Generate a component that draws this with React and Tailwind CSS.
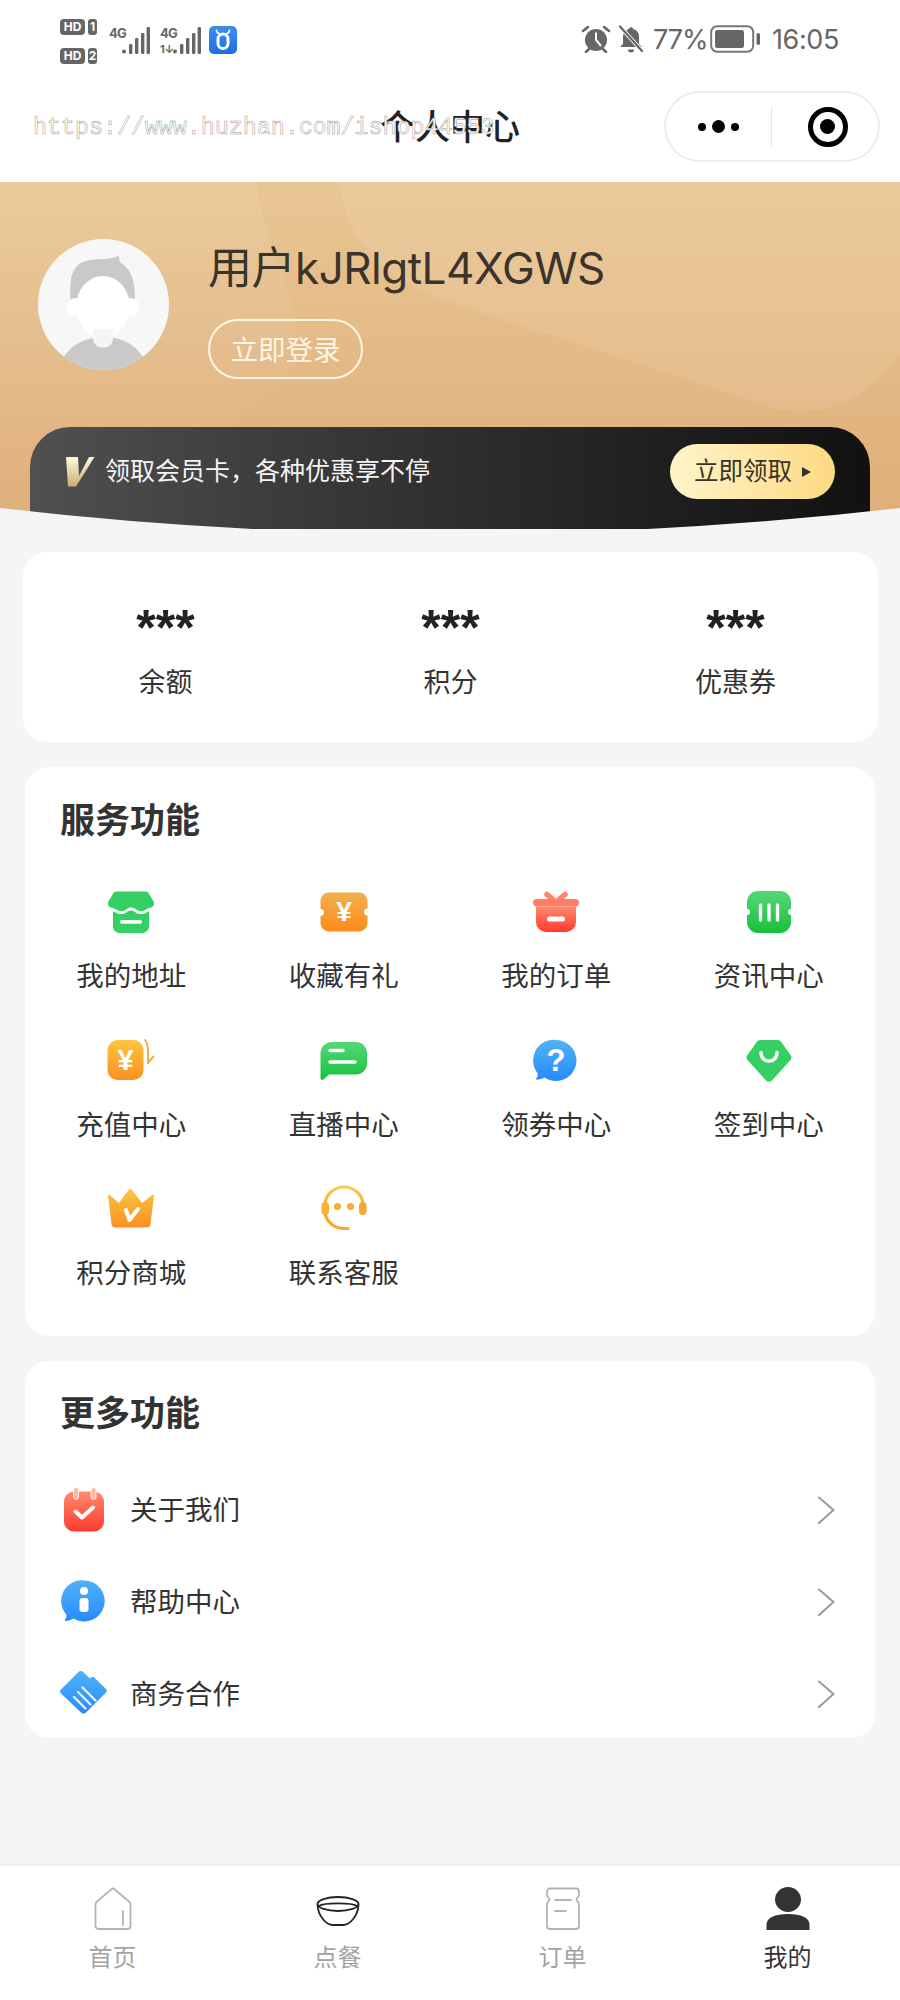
import React from "react";

const Grad = ({ id, from, to }) => (
  <linearGradient id={id} x1="0" y1="0" x2="0" y2="1">
    <stop offset="0" stopColor={from} />
    <stop offset="1" stopColor={to} />
  </linearGradient>
);

const Icon = ({ children, w = 48, h = 48 }) => (
  <svg width={w} height={h} viewBox={`0 0 ${w} ${h}`} fill="none" className="block shrink-0">
    {children}
  </svg>
);

const Yen = ({ x = 24, y = 33, size = 27 }) => (
  <text x={x} y={y} textAnchor="middle" fontSize={size} fontWeight="700" fill="#fff" fontFamily="Liberation Sans, sans-serif">¥</text>
);

const StoreIcon = () => (
  <Icon>
    <path d="M9 3.500h30a3 3 0 0 1 2.600 1.500l5 8.500c1.500 3-.5 6.500-4.600 6.500v18.500a6.500 6.500 0 0 1-6.500 6.500h-23A6.500 6.500 0 0 1 6 38V20c-4.100 0-6.100-3.500-4.600-6.500l5-8.500A3 3 0 0 1 9 3.500z" fill="#36cf63" />
    <path d="M4.500 21.500c4.500 0 4.500 3.200 10 3.200S19 21 24 21s4.500 3.700 10 3.700 4.500-3.200 9.500-3.200" stroke="#fff" strokeWidth="2.800" strokeLinecap="round" />
    <rect x="13" y="32" width="22" height="3.800" rx="1.900" fill="#fff" />
  </Icon>
);
const TicketIcon = () => (
  <Icon>
    <path d="M9 4.500h30a8.500 8.500 0 0 1 8.500 8.500v7.500a3.500 3.500 0 0 0 0 7V35a8.500 8.500 0 0 1-8.500 8.500H9A8.500 8.500 0 0 1 .5 35v-7a3.500 3.500 0 0 0 0-7v-8A8.500 8.500 0 0 1 9 4.500z" fill="url(#gOrange)" />
    <Yen y={33} size={28} />
  </Icon>
);
const GiftIcon = () => (
  <Icon>
    <path d="M15 6.500l6 5M33 6.500l-6 5" stroke="#ff8468" strokeWidth="5.500" strokeLinecap="round" />
    <rect x="1" y="11" width="46" height="7.500" rx="3.700" fill="#ff7d62" />
    <path d="M4 18.500h40V34a10 10 0 0 1-10 10H14A10 10 0 0 1 4 34z" fill="url(#gRed)" />
    <rect x="15" y="28.500" width="18" height="5" rx="2.500" fill="#fff" />
  </Icon>
);
const NewsIcon = () => (
  <Icon>
    <path d="M13 3h22a11 11 0 0 1 11 11v7a3 3 0 0 0 0 6v7a11 11 0 0 1-11 11H13A11 11 0 0 1 2 34v-7a3 3 0 0 0 0-6v-7A11 11 0 0 1 13 3z" fill="url(#gGreen)" />
    <path d="M15.500 17v15M24 17v15M32.500 17v15" stroke="#fff" strokeWidth="3.400" strokeLinecap="round" />
  </Icon>
);
const RechargeIcon = () => (
  <Icon>
    <rect x="0.500" y="3" width="36" height="40" rx="10" fill="url(#gAmber)" />
    <Yen x={18.500} y={33} size={29} />
    <path d="M38 3c3 4 3.500 9 3 23l5.500-6.500" stroke="#f3a74e" strokeWidth="2" strokeLinecap="round" strokeLinejoin="round" />
  </Icon>
);
const ChatIcon = () => (
  <Icon>
    <path d="M12 5h24a11 11 0 0 1 11 11v10.500a11 11 0 0 1-11 11H9L3.500 42.500C2 43.500.5 43 .5 41V16.500A11.500 11.500 0 0 1 12 5z" fill="url(#gGreen)" />
    <path d="M10 13.500h13M10 25h25" stroke="#fff" strokeWidth="3.400" strokeLinecap="round" />
  </Icon>
);
const QuestionIcon = () => (
  <Icon>
    <path d="M24 3a20.500 20.500 0 1 1-11.500 37.500C10 42 6 42.800 4.500 42.500c-1-.3-.5-1 0-1.500 1-1 1.500-3 1-5A20.500 20.500 0 0 1 24 3z" fill="url(#gBlue)" />
    <text x="24" y="34" textAnchor="middle" fontSize="31" fontWeight="700" fill="#fff" fontFamily="Liberation Sans, sans-serif">?</text>
  </Icon>
);
const TagIcon = () => (
  <Icon>
    <path d="M15 3h18a4 4 0 0 1 3 1.500L45.500 18a4 4 0 0 1 0 5L27 43.500a4 4 0 0 1-6 0L2.500 23a4 4 0 0 1 0-5L12 4.500A4 4 0 0 1 15 3z" fill="#36cf63" />
    <path d="M16 15.500c0 11.500 16 11.500 16 0" stroke="#fff" strokeWidth="3.400" strokeLinecap="round" />
  </Icon>
);
const CrownIcon = () => (
  <Icon>
    <path d="M1 10.500c0-1 1-1.300 1.700-.6L12 18 21.500 5c1-1.300 2.500-1.300 3.500 0L35 18l10.300-8c.8-.6 1.700-.2 1.700.7L43.500 39a4 4 0 0 1-4 3.500H8.500a4 4 0 0 1-4-3.500z" fill="url(#gAmber)" />
    <path d="M19 25l3.500 10L31 24" stroke="#fff" strokeWidth="4" strokeLinecap="round" strokeLinejoin="round" />
  </Icon>
);
const HeadsetIcon = () => (
  <Icon>
    <path d="M5 20a19 18 0 0 1 38 0" stroke="url(#gAmberV)" strokeWidth="3.200" fill="none" />
    <path d="M5 26c0 10 9 17 18 17.500h5" stroke="#f9a72b" strokeWidth="3.200" strokeLinecap="round" />
    <rect x="1.500" y="17" width="7.500" height="13" rx="3.700" fill="#f9b23a" />
    <rect x="39" y="17" width="7.500" height="13" rx="3.700" fill="#f9a72b" />
    <circle cx="17.500" cy="21.500" r="3.600" fill="#f9ad32" />
    <circle cx="30.500" cy="21.500" r="3.600" fill="#f9ad32" />
  </Icon>
);
const CalendarIcon = () => (
  <Icon>
    <rect x="4" y="5.500" width="40" height="40" rx="10" fill="url(#gRed)" />
    <rect x="13.500" y="1.500" width="5" height="12" rx="2.500" fill="#ffb9a3" stroke="#fff" strokeWidth="0.800" />
    <rect x="31" y="1.500" width="5" height="12" rx="2.500" fill="#ffb9a3" stroke="#fff" strokeWidth="0.800" />
    <path d="M15.500 25.500l6.500 6 11-10" stroke="#fff" strokeWidth="4" strokeLinecap="round" strokeLinejoin="round" />
  </Icon>
);
const InfoIcon = () => (
  <Icon>
    <path d="M24 2.500a20.500 20.500 0 1 1-10.500 38c-2.500 1.500-6 2.700-8 2.500-1-.2-.8-1-.2-1.700 1-1.300 1.400-3 .9-5A20.500 20.500 0 0 1 24 2.500z" fill="url(#gBlue)" />
    <circle cx="24" cy="13" r="4" fill="#fff" />
    <rect x="19.500" y="20" width="9" height="14" rx="3" fill="#fff" />
  </Icon>
);
const ShakeIcon = () => (
  <Icon>
    <path d="M.5 20l18-18c1.300-1.300 3-1.300 4.500 0l7 6.500c1-1 2.800-2.500 4.200-1L46 19c1 1 1 2.500 0 3.500L26 42.500c-1.500 1.500-3.500 1.500-5 0L.5 23c-1-1-1-2 0-3z" fill="url(#gBlue)" />
    <path d="M18 22l12.500 12.500M14 27l11.500 11.500M22.500 17.500l13 13" stroke="#fff" strokeWidth="2.200" strokeLinecap="round" opacity="0.9" />
  </Icon>
);

const HomeTab = () => (
  <Icon w={38} h={43}>
    <path d="M19 1.500c.7 0 1.300.4 1.700 1L35.500 15c.7.700 1 1.500 1 2.500V39a3 3 0 0 1-3 3h-29a3 3 0 0 1-3-3V17.500c0-1 .3-1.800 1-2.500L17.300 2.500c.4-.6 1-1 1.700-1z" stroke="#b4b4b4" strokeWidth="1.800" />
    <path d="M29 24v14" stroke="#b4b4b4" strokeWidth="1.800" strokeLinecap="round" />
  </Icon>
);
const BowlTab = () => (
  <Icon w={44} h={43}>
    <ellipse cx="22" cy="17" rx="20.500" ry="7" stroke="#222" strokeWidth="1.800" />
    <path d="M3 19c5-3.500 33-3.500 38 0" stroke="#222" strokeWidth="1.800" />
    <path d="M1.500 17.500C2 29 10 38 17 38h10c7 0 15-9 15.500-20.500" stroke="#222" strokeWidth="1.800" />
  </Icon>
);
const OrderTab = () => (
  <Icon w={38} h={43}>
    <path d="M6 1.500h26a3 3 0 0 1 3 3V8c0 2-2.500 3-2.500 4.500S35 15 35 17v22a3 3 0 0 1-3 3H6a3 3 0 0 1-3-3V17c0-2 2.500-3 2.500-4.500S3 10 3 8V4.500a3 3 0 0 1 3-3z" stroke="#b4b4b4" strokeWidth="1.800" />
    <path d="M11 13h16M11 24h11" stroke="#b4b4b4" strokeWidth="1.800" strokeLinecap="round" />
  </Icon>
);
const MeTab = () => (
  <Icon w={44} h={43}>
    <ellipse cx="22" cy="12.500" rx="13" ry="12.500" fill="#333" />
    <path d="M.5 43v-5.500C.5 31 9 27 22 27s21.500 4 21.500 10.500V43z" fill="#333" />
  </Icon>
);

const Chevron = () => (
  <svg width="18" height="28" viewBox="0 0 18 28" fill="none" className="block">
    <path d="M2 1.500L16.500 14 2 27" stroke="#999" strokeWidth="2" strokeLinecap="round" strokeLinejoin="round" />
  </svg>
);

const Signal = () => (
  <svg width="28" height="27" viewBox="0 0 28 27" fill="#666" className="block">
    <circle cx="2" cy="24.500" r="2" />
    <rect x="7" y="17" width="3.400" height="10" rx="1.200" />
    <rect x="13" y="11" width="3.400" height="16" rx="1.200" />
    <rect x="19" y="6" width="3.400" height="21" rx="1.200" />
    <rect x="24.600" y="0" width="3.400" height="27" rx="1.200" />
  </svg>
);

const services = [
  ["我的地址", StoreIcon],
  ["收藏有礼", TicketIcon],
  ["我的订单", GiftIcon],
  ["资讯中心", NewsIcon],
  ["充值中心", RechargeIcon],
  ["直播中心", ChatIcon],
  ["领券中心", QuestionIcon],
  ["签到中心", TagIcon],
  ["积分商城", CrownIcon],
  ["联系客服", HeadsetIcon],
];

const more = [
  ["关于我们", CalendarIcon],
  ["帮助中心", InfoIcon],
  ["商务合作", ShakeIcon],
];

const tabs = [
  ["首页", HomeTab, false],
  ["点餐", BowlTab, false],
  ["订单", OrderTab, false],
  ["我的", MeTab, true],
];

const stats = ["余额", "积分", "优惠券"];

export default function App() {
  return (
    <div className="relative flex flex-col w-[900px] h-[2000px] overflow-hidden bg-[#f5f5f5] text-[#333] font-['Inter','Noto_Sans_CJK_SC',sans-serif]">
      <svg width="0" height="0" className="absolute">
        <defs>
          <Grad id="gOrange" from="#efb14f" to="#fd8a1a" />
          <Grad id="gAmber" from="#fcc63f" to="#fb8f22" />
          <Grad id="gAmberV" from="#f8cb55" to="#f9ae35" />
          <Grad id="gRed" from="#ff8a6b" to="#ff3a30" />
          <Grad id="gGreen" from="#55d878" to="#18c03a" />
          <Grad id="gBlue" from="#50b3f4" to="#278aff" />
          <linearGradient id="gV" x1="0" y1="0" x2="0" y2="1">
            <stop offset="0" stopColor="#fff9dd" />
            <stop offset="1" stopColor="#c7ae72" />
          </linearGradient>
        </defs>
      </svg>

      <div className="bg-white h-[182px] shrink-0 flex flex-col">
        {/* status bar */}
        <div className="h-[72px] pt-[6px] pl-[60px] pr-[60px] flex items-center justify-between text-[#666]">
          <div className="flex items-center">
            <div className="flex flex-col gap-[13px] w-[37px] mt-[4px] text-white text-[12px] font-bold leading-none">
              <div className="flex gap-[3px]">
                <span className="w-[25px] h-[16px] rounded-[4px] bg-[#666] flex items-center justify-center">HD</span>
                <span className="w-[9px] h-[16px] rounded-[3px] bg-[#666] flex items-center justify-center">1</span>
              </div>
              <div className="flex gap-[3px]">
                <span className="w-[25px] h-[16px] rounded-[4px] bg-[#666] flex items-center justify-center">HD</span>
                <span className="w-[9px] h-[16px] rounded-[3px] bg-[#666] flex items-center justify-center">2</span>
              </div>
            </div>
            <div className="relative w-[42px] h-[27px] ml-[12px] mt-[2px]">
              <span className="absolute left-0 top-[-1px] text-[13px] font-bold leading-[14px] tracking-[-0.8px]">4G</span>
              <div className="absolute left-[13px] top-0"><Signal /></div>
            </div>
            <div className="relative w-[42px] h-[27px] ml-[9px] mt-[2px]">
              <span className="absolute left-0 top-[-1px] text-[13px] font-bold leading-[14px] tracking-[-0.8px]">4G</span>
              <span className="absolute left-0 top-[17px] text-[11px] font-bold leading-[10px] tracking-[-0.5px]">1↓</span>
              <div className="absolute left-[13px] top-0"><Signal /></div>
            </div>
            <div className="w-[28px] h-[28px] ml-[7px] mt-[2px] rounded-[5px] bg-linear-to-b from-[#3d8df0] to-[#1e6fe0] flex items-center justify-center">
              <svg width="20" height="22" viewBox="0 0 20 22" fill="none">
                <rect x="5" y="5" width="10" height="14.500" rx="5" stroke="#fff" strokeWidth="3" />
                <path d="M3.500 1.500c.3 2 1.500 3 3 3.500M16.500 1.500c-.3 2-1.500 3-3 3.500" stroke="#fff" strokeWidth="1.800" strokeLinecap="round" />
              </svg>
            </div>
          </div>
          <div className="flex items-center">
            <svg width="30" height="28" viewBox="0 0 30 28" className="block">
              <circle cx="15" cy="15" r="11" fill="#666" />
              <path d="M15 7.500V15l5 6" stroke="#fff" strokeWidth="2" fill="none" />
              <path d="M2 6l5-4M28 6l-5-4M5 27l3-3M25 27l-3-3" stroke="#666" strokeWidth="2.500" strokeLinecap="round" />
            </svg>
            <svg width="28" height="28" viewBox="0 0 28 28" className="block ml-[6px]">
              <path d="M14 2c1 0 2 .8 2 2 4 1 6 4 6 8v7l3 3H3l3-3v-7c0-2 .500-3.500 1.500-5z" fill="#666" />
              <path d="M11 24.500h6a3 3 0 0 1-6 0z" fill="#666" />
              <path d="M3 1.500L25 26" stroke="#fff" strokeWidth="4" />
              <path d="M3 1.500L25 26" stroke="#666" strokeWidth="2.200" strokeLinecap="round" />
            </svg>
            <span className="ml-[8px] text-[27px] leading-none tracking-[-1px] w-[52px] whitespace-nowrap">77%</span>
            <svg width="50" height="28" viewBox="0 0 50 28" fill="none" className="block ml-[5px]">
              <rect x="1.200" y="1.200" width="42" height="25.600" rx="6" stroke="#777" strokeWidth="2" />
              <rect x="5" y="5" width="29" height="18" rx="2.500" fill="#666" />
              <rect x="46.500" y="8" width="3.500" height="12" rx="1.700" fill="#666" />
            </svg>
            <span className="ml-[12px] text-[27px] leading-none tracking-[-0.4px] w-[68px] whitespace-nowrap">16:05</span>
          </div>
        </div>
        {/* nav */}
        <div className="relative h-[110px] flex items-center justify-center">
          <span className="text-[35px] leading-none font-medium text-[#222]">个人中心</span>
          <div className="absolute right-[20px] top-[19px] w-[216px] h-[71px] rounded-full border-2 border-[#ececec] flex items-center">
            <div className="w-[105px] flex items-center justify-center gap-[6px]">
              <span className="w-[8px] h-[8px] rounded-full bg-black" />
              <span className="w-[13px] h-[13px] rounded-full bg-black" />
              <span className="w-[8px] h-[8px] rounded-full bg-black" />
            </div>
            <div className="w-px h-[42px] bg-[#e6e6e6]" />
            <div className="flex-1 flex items-center justify-center pl-[5px]">
              <span className="w-[40px] h-[40px] rounded-full border-[5px] border-black flex items-center justify-center">
                <span className="w-[15px] h-[15px] rounded-full bg-black" />
              </span>
            </div>
          </div>
        </div>
      </div>

      {/* gold header */}
      <div className="relative h-[347px] shrink-0 overflow-hidden flex flex-col bg-linear-to-b from-[#eacb9c] to-[#dfae7b]">
        <svg width="900" height="347" viewBox="0 0 900 347" className="absolute left-0 top-0">
          <path d="M257 0C258 50 300 110 298 170C296 200 255 215 232 245V347H900V0Z" fill="#e0ad6c" opacity="0.16" />
          <path d="M339 0C345 55 385 95 435 115L770 225C825 240 870 215 900 170V0Z" fill="#f6e2c5" opacity="0.16" />
        </svg>
        <div className="relative flex pl-[38px] pt-[57px] h-[245px]">
          <svg width="131" height="131" viewBox="0 0 131 131" className="block shrink-0">
            <defs>
              <clipPath id="avatarClip"><circle cx="65.500" cy="65.500" r="65.500" /></clipPath>
            </defs>
            <g clipPath="url(#avatarClip)">
              <rect width="131" height="131" fill="#f7f7f7" />
              <path d="M33 66c-2-24 0-38 12-43 10-4 20-2 29-4l7-2c0 3 0 5 2 7 10 6 15 18 14 42z" fill="#c9c9c9" />
              <path d="M22 125c8-18 24-27 44-27s34 9 43 27v10H22z" fill="#c9c9c9" />
              <ellipse cx="65" cy="68" rx="27" ry="31" fill="#fff" />
              <ellipse cx="37" cy="68" rx="8" ry="9" fill="#fff" />
              <ellipse cx="93" cy="68" rx="8" ry="9" fill="#fff" />
              <path d="M55 90h20v9c0 13-20 13-20 0z" fill="#f5f5f5" />
            </g>
          </svg>
          <div className="ml-[39px] -mt-[1px]">
            <div className="h-[60px] flex items-center text-[44px] leading-none text-[#3a342c] tracking-[-0.5px] whitespace-nowrap">用户kJRlgtL4XGWS</div>
            <div className="mt-[21px] w-[155px] h-[60px] rounded-full border-2 border-[#fff6e6] flex items-center justify-center pt-[3px] text-[27.500px] leading-none text-[#fff6e6]">立即登录</div>
          </div>
        </div>
        <div className="relative mx-[30px] h-[102px] rounded-t-[40px] bg-linear-to-r from-[#505050] to-[#111] flex items-start pt-[17px] pl-[35px] pr-[35px]">
          <div className="flex-1 flex items-center h-[55px]">
            <svg width="30" height="31" viewBox="0 0 30 31" className="block shrink-0">
              <polygon points="1,1 13,1 14,20 24,1 29.500,1 11,30.500 3,30.500" fill="url(#gV)" />
            </svg>
            <span className="ml-[10px] text-[25px] leading-none text-[#f4f4f4] whitespace-nowrap">领取会员卡，各种优惠享不停</span>
          </div>
          <div className="w-[165px] h-[55px] rounded-full bg-linear-to-r from-[#fff4ca] to-[#fdd981] flex items-center pl-[24px] text-[24.500px] leading-none text-[#3a3226]">
            立即领取
            <span className="ml-[10px] w-0 h-0 border-y-[5px] border-y-transparent border-l-[9px] border-l-[#333]" />
          </div>
        </div>
        <svg width="900" height="21" viewBox="0 0 900 21" className="absolute left-0 bottom-0">
          <path d="M0 0Q450 52 900 0V21H0Z" fill="#f5f5f5" />
        </svg>
      </div>

      {/* stats */}
      <div className="mt-[23px] ml-[23px] w-[855px] h-[190px] shrink-0 rounded-[24px] bg-white grid grid-cols-3">
        {stats.map((s) => (
          <div key={s} className="flex flex-col items-center pt-[50px]">
            <span className="h-[46px] text-[50px] leading-[52px] font-bold text-[#222] font-['Liberation_Sans',sans-serif]">***</span>
            <span className="mt-[17px] text-[27px] leading-[36px]">{s}</span>
          </div>
        ))}
      </div>

      {/* services */}
      <div className="mt-[25px] mx-[25px] h-[569px] shrink-0 rounded-[24px] bg-white pt-[28px]">
        <div className="pl-[35px] h-[50px] flex items-center text-[35px] leading-none font-bold text-[#333]">服务功能</div>
        <div className="mt-[36px] grid grid-cols-4 auto-rows-[148.500px]">
          {services.map(([label, Ico]) => (
            <div key={label} className="flex flex-col items-center">
              <div className="h-[62px] flex items-center justify-center"><Ico /></div>
              <span className="mt-[13px] text-[27.500px] leading-[40px] text-[#333]">{label}</span>
            </div>
          ))}
        </div>
      </div>

      {/* more */}
      <div className="mt-[25px] mx-[25px] h-[377px] shrink-0 rounded-[24px] bg-white pt-[27px]">
        <div className="pl-[35px] h-[50px] flex items-center text-[35px] leading-none font-bold text-[#333]">更多功能</div>
        <div className="mt-[26px] flex flex-col">
          {more.map(([label, Ico]) => (
            <div key={label} className="h-[92px] flex items-center pl-[35px] pr-[40px]">
              <Ico />
              <span className="ml-[22px] pt-[2px] flex-1 text-[27.500px] leading-none text-[#333]">{label}</span>
              <Chevron />
            </div>
          ))}
        </div>
      </div>

      {/* tab bar */}
      <div className="mt-auto h-[136px] shrink-0 bg-white border-t-2 border-[#eeeeee] grid grid-cols-4 pt-[21px]">
        {tabs.map(([label, Ico, active]) => (
          <div key={label} className="flex flex-col items-center">
            <div className="h-[43px] flex items-center justify-center"><Ico /></div>
            <span className={active ? "mt-[11px] text-[24px] leading-[34px] text-[#333]" : "mt-[11px] text-[24px] leading-[34px] text-[#a3a3a3]"}>{label}</span>
          </div>
        ))}
      </div>

      {/* watermark */}
      <div className="absolute left-[33px] top-[114px] font-['Liberation_Mono',monospace] text-[23.300px] leading-[28px] text-white [-webkit-text-stroke:0.5px_#999] whitespace-nowrap">https://www.huzhan.com/ishop44553</div>
    </div>
  );
}
